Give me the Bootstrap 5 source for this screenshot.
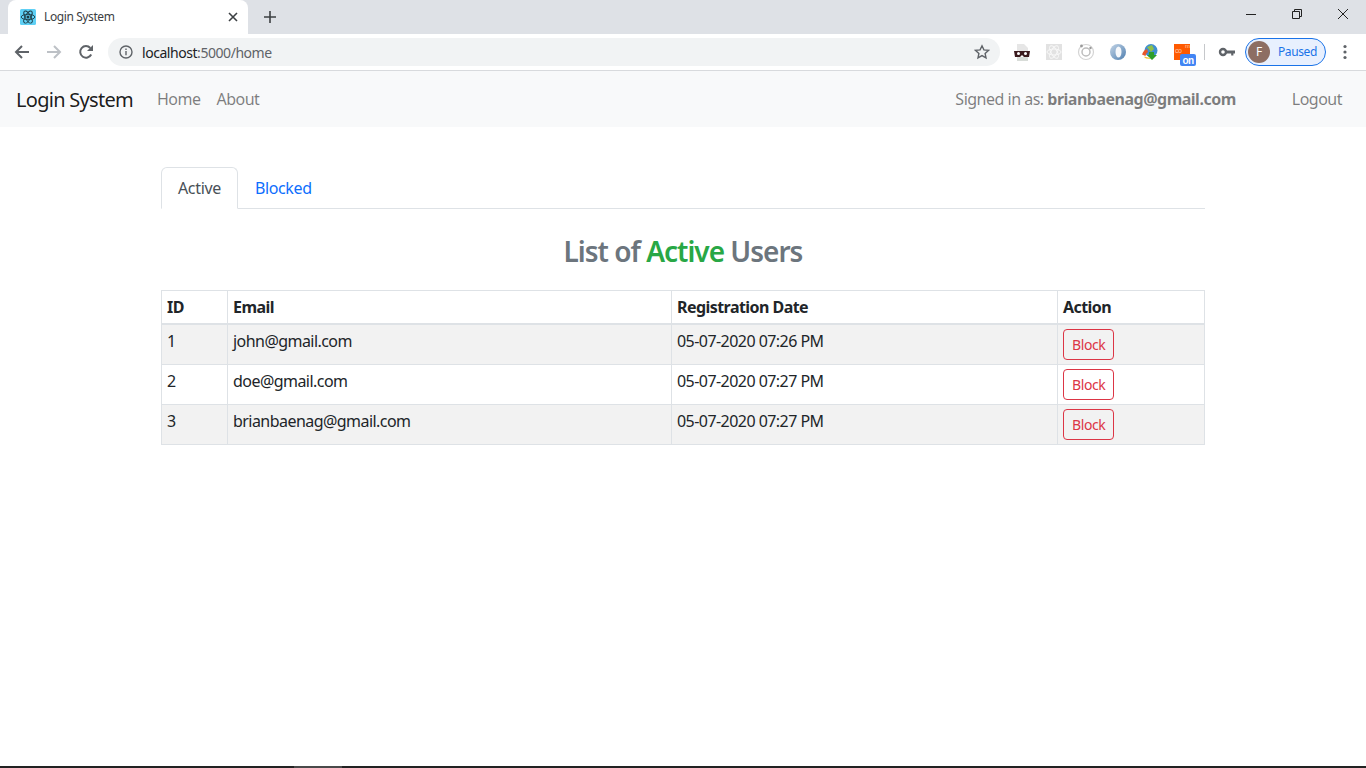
<!DOCTYPE html>
<html lang="en">

<head>
    <meta charset="UTF-8">
    <title>Login System</title>
    <link rel="stylesheet" href="https://cdn.jsdelivr.net/npm/bootstrap@5.3.3/dist/css/bootstrap.min.css">
    <style>
        html, body { height: 768px; overflow: hidden; }
        body { font-family: "Noto Sans", "Open Sans", sans-serif; color: #212529; letter-spacing: -0.5px; display: flex; flex-direction: column; }

        /* browser chrome */
        .tab-strip { height: 34px; background: #dee1e6; padding-left: 8px; }
        .browser-tab { width: 240px; height: 34px; background: #fff; border-radius: 8px 8px 0 0; padding: 0 10px 0 12px; font-size: 12px; color: #3c4043; letter-spacing: -0.4px; }
        .new-tab { width: 44px; height: 34px; }
        .win-btn { width: 46px; height: 28px; margin-bottom: 6px; }
        .tool-strip { height: 37px; background: #fff; border-bottom: 1px solid #d8dadd; padding-left: 6px; }
        .tool-btn { width: 32px; height: 32px; flex: none; }
        .url-box { width: 892px; height: 28px; margin-left: 6px; background: #f1f3f4; border-radius: 14px; padding: 0 10px 0 11px; font-size: 14px; color: #202124; letter-spacing: -0.45px; }
        .url-text { margin-left: 1px; }
        .url-dim { color: #5f6368; }
        .ext-row { gap: 8px; margin-left: 10px; }
        .ext-icon { width: 24px; height: 24px; flex: none; overflow: visible; }
        .tool-sep { width: 1px; height: 16px; background: #c6c8cb; margin: 0 10px; }
        .paused-pill { width: 81px; height: 28px; border: 1px solid #1a73e8; border-radius: 14px; background: #e8f0fe; padding-left: 2px; font-size: 12px; color: #1a73e8; letter-spacing: -0.4px; margin-left: 6px; }
        .paused-face { width: 22px; height: 22px; border-radius: 50%; background: #8d6e63; color: #fff; font-size: 12px; margin-right: 8px; }
        .kebab { margin-left: 7px; }

        /* app */
        .app-nav { height: 56px; padding: 0 16px; }
        .app-nav .navbar-brand { font-size: 20px; margin-right: 16px; padding: 2px 0 0; letter-spacing: -0.72px; color: rgba(0, 0, 0, .9); }
        .app-nav .nav-link { padding: 8px; font-size: 16px; color: rgba(0, 0, 0, .5); }
        .signed-in { color: rgba(0, 0, 0, .5); margin-right: 48px; }
        .page-wrap { width: 1044px; margin: 40px auto 0; flex: 1; }
        .list-title { font-size: 28px; font-weight: 600; color: #6c757d; margin: 25px 0 22px; line-height: 34px; text-align: center; letter-spacing: -1px; }
        .active-word { color: #28a745; }
        .users-table { table-layout: fixed; margin: 0; width: 1043px; letter-spacing: -0.55px; }
        .users-table th, .users-table td { padding: 4px 5px 3px; }
        .users-table thead th { border-bottom-width: 2px; height: 33px; vertical-align: middle; padding: 4px 5px; }
        .users-table tbody td { height: 40px; vertical-align: top; }
        .users-table > tbody > tr:nth-of-type(odd) > * { --bs-table-bg-type: #f2f2f2; }
        .block-btn { display: block; letter-spacing: -0.4px; }
        .nav-tabs .nav-link { padding: 8px 16px; height: 42px; letter-spacing: -0.35px; }
        .nav-tabs .nav-link.active { color: #495057; }
        .taskbar-line { height: 2px; background: #222; flex: none; position: relative; }
        .taskbar-lit { position: absolute; left: 294px; top: 0; width: 48px; height: 2px; background: #4a4a4a; }
    </style>
</head>

<body>
    <!-- barra de pestañas -->
    <div class="tab-strip d-flex align-items-end flex-none">
        <div class="browser-tab d-flex align-items-center">
            <svg width="16" height="16" viewBox="0 0 16 16" class="me-2 flex-shrink-0">
                <rect width="16" height="16" rx="1.5" fill="#5fd0f5"/>
                <g fill="none" stroke="#1d3a44" stroke-width=".9">
                    <ellipse cx="8" cy="8" rx="6.8" ry="2.7"/>
                    <ellipse cx="8" cy="8" rx="6.8" ry="2.7" transform="rotate(60 8 8)"/>
                    <ellipse cx="8" cy="8" rx="6.8" ry="2.7" transform="rotate(120 8 8)"/>
                </g>
                <circle cx="8" cy="8" r="1.5" fill="#1d3a44"/>
            </svg>
            <span class="flex-grow-1">Login System</span>
            <svg width="10" height="10" viewBox="0 0 10 10"><path d="M1 1l8 8M9 1l-8 8" stroke="#3c4043" stroke-width="1.6"/></svg>
        </div>
        <div class="new-tab d-flex align-items-center justify-content-center">
            <svg width="12" height="12" viewBox="0 0 12 12"><path d="M6 0v12M0 6h12" stroke="#3c4043" stroke-width="1.6"/></svg>
        </div>
        <div class="d-flex ms-auto">
            <div class="win-btn d-flex align-items-center justify-content-center">
                <svg width="10" height="10" viewBox="0 0 10 10"><path d="M0 5.5h10" stroke="#222"/></svg>
            </div>
            <div class="win-btn d-flex align-items-center justify-content-center">
                <svg width="10" height="10" viewBox="0 0 10 10"><path d="M.5 2.5h7v7h-7zM2.5 2.5v-2h7v7h-2" fill="none" stroke="#222"/></svg>
            </div>
            <div class="win-btn d-flex align-items-center justify-content-center">
                <svg width="10" height="10" viewBox="0 0 10 10"><path d="M0 0l10 10M10 0l-10 10" stroke="#222"/></svg>
            </div>
        </div>
    </div>

    <!-- barra de herramientas -->
    <div class="tool-strip d-flex align-items-center">
        <div class="tool-btn d-flex align-items-center justify-content-center">
            <svg width="16" height="16" viewBox="0 0 16 16"><path d="M15 8H2M8 2L2 8l6 6" fill="none" stroke="#5f6368" stroke-width="2"/></svg>
        </div>
        <div class="tool-btn d-flex align-items-center justify-content-center">
            <svg width="16" height="16" viewBox="0 0 16 16"><path d="M1 8h13M8 2l6 6-6 6" fill="none" stroke="#bdc1c6" stroke-width="2"/></svg>
        </div>
        <div class="tool-btn d-flex align-items-center justify-content-center">
            <svg width="16" height="16" viewBox="0 0 16 16"><path d="M13.2 10.5A5.8 5.8 0 1 1 12.3 4" fill="none" stroke="#5f6368" stroke-width="2"/><path d="M15 1v6H9z" fill="#5f6368"/></svg>
        </div>
        <div class="url-box d-flex align-items-center">
            <svg width="14" height="14" viewBox="0 0 14 14" class="me-2 flex-shrink-0"><circle cx="7" cy="7" r="6" fill="none" stroke="#5f6368" stroke-width="1.4"/><path d="M7 6v4.2M7 3.6v1.4" stroke="#5f6368" stroke-width="1.4"/></svg>
            <span class="flex-grow-1 url-text">localhost<span class="url-dim">:5000/home</span></span>
            <svg width="16" height="16" viewBox="0 0 16 16"><path d="M8 1.8l1.9 4.1 4.5.5-3.3 3 .9 4.4L8 11.6l-4 2.2.9-4.4-3.3-3 4.5-.5z" fill="none" stroke="#5f6368" stroke-width="1.4"/></svg>
        </div>
        <div class="ext-row d-flex align-items-center">
            <svg class="ext-icon" viewBox="0 0 24 24"><path d="M7 4h7l4 4v4H7z" fill="#e6e6e6"/><rect x="7" y="17" width="11" height="4" fill="#d8dcd8"/><path d="M4 11h16l-1 6h-5l-2-2-2 2H5z" fill="#3a1a1d"/><circle cx="8.5" cy="13.5" r="1.5" fill="#fff"/><circle cx="15.5" cy="13.5" r="1.5" fill="#fff"/></svg>
            <svg class="ext-icon" viewBox="0 0 24 24"><rect x="4" y="4" width="16" height="16" fill="#e2e2e2"/><g fill="none" stroke="#f8f8f8"><ellipse cx="12" cy="12" rx="7" ry="3"/><ellipse cx="12" cy="12" rx="7" ry="3" transform="rotate(60 12 12)"/><ellipse cx="12" cy="12" rx="7" ry="3" transform="rotate(120 12 12)"/></g></svg>
            <svg class="ext-icon" viewBox="0 0 24 24"><circle cx="12" cy="12" r="7.5" fill="none" stroke="#d4d4d4" stroke-width="1.2"/><circle cx="12" cy="12" r="4" fill="none" stroke="#bdbdbd" stroke-width="1.5"/><circle cx="7.5" cy="6" r="1.4" fill="#999"/><circle cx="16.5" cy="8" r="1.2" fill="#999"/></svg>
            <svg class="ext-icon" viewBox="0 0 24 24">
                <defs><linearGradient id="ringfill" x1="0" y1="0" x2="1" y2="1"><stop offset="0" stop-color="#c3d4e6"/><stop offset="1" stop-color="#4f7fb0"/></linearGradient></defs>
                <circle cx="12" cy="12" r="8" fill="url(#ringfill)"/><ellipse cx="12.5" cy="12" rx="3" ry="5.5" fill="#f6f8fb"/>
            </svg>
            <svg class="ext-icon" viewBox="0 0 24 24"><circle cx="13" cy="10.5" r="6.5" fill="#3f8fd0"/><path d="M9 7l5-2 2 4-3 3z" fill="#8fc04a"/><path d="M4 14.5c1-3 3-5 5-5.5l1 3c-1 .5-2 1.5-2.500 4z" fill="#e8562a"/><path d="M6 17c1-.5 3 .5 6 1l1 1-5-.5z" fill="#f2c230"/><path d="M11 12h5v3h3l-5 5-5-5h2z" fill="#2f9e2a"/></svg>
            <svg class="ext-icon" viewBox="0 0 24 24"><rect x="4" y="4" width="16" height="16" fill="#ff5a00"/><text x="5" y="13" font-size="7" fill="#ffc9a8" font-family="Liberation Sans, sans-serif">co</text><text x="15" y="8" font-size="6" fill="#ffc9a8" font-family="Liberation Sans, sans-serif">m</text><rect x="10" y="14" width="16" height="12" rx="2" fill="#4285f4"/><text x="18" y="24" font-size="10" font-weight="700" fill="#fff" text-anchor="middle" font-family="Liberation Sans, sans-serif">on</text></svg>
        </div>
        <div class="tool-sep"></div>
        <svg class="ext-icon" viewBox="0 0 24 24"><circle cx="8" cy="12" r="3" fill="none" stroke="#5f6368" stroke-width="2.4"/><path d="M10 10.500h10v3h-1.600v2h-2.200v-2H10z" fill="#5f6368"/></svg>
        <div class="paused-pill d-flex align-items-center">
            <div class="paused-face d-flex align-items-center justify-content-center">F</div>
            <span>Paused</span>
        </div>
        <svg class="ext-icon kebab" viewBox="0 0 24 24"><circle cx="12" cy="6.500" r="1.600" fill="#5f6368"/><circle cx="12" cy="12" r="1.600" fill="#5f6368"/><circle cx="12" cy="17.500" r="1.600" fill="#5f6368"/></svg>
    </div>

    <!-- navbar -->
    <nav class="navbar navbar-expand navbar-light bg-light app-nav">
        <a class="navbar-brand" href="#">Login System</a>
        <ul class="navbar-nav me-auto">
            <li class="nav-item"><a class="nav-link" href="#">Home</a></li>
            <li class="nav-item"><a class="nav-link" href="#">About</a></li>
        </ul>
        <span class="signed-in">Signed in as: <b>brianbaenag@gmail.com</b></span>
        <ul class="navbar-nav">
            <li class="nav-item"><a class="nav-link" href="#">Logout</a></li>
        </ul>
    </nav>

    <div class="page-wrap">
        <ul class="nav nav-tabs">
            <li class="nav-item"><a class="nav-link active" href="#">Active</a></li>
            <li class="nav-item"><a class="nav-link" href="#">Blocked</a></li>
        </ul>

        <h2 class="list-title">List of <span class="active-word">Active</span> Users</h2>

        <table class="table table-bordered table-striped users-table">
            <colgroup>
                <col style="width: 66px">
                <col style="width: 444px">
                <col style="width: 386px">
                <col style="width: 147px">
            </colgroup>
            <thead>
                <tr>
                    <th>ID</th>
                    <th>Email</th>
                    <th>Registration Date</th>
                    <th>Action</th>
                </tr>
            </thead>
            <tbody>
                <tr>
                    <td>1</td>
                    <td>john@gmail.com</td>
                    <td>05-07-2020 07:26 PM</td>
                    <td><button class="btn btn-outline-danger btn-sm block-btn">Block</button></td>
                </tr>
                <tr>
                    <td>2</td>
                    <td>doe@gmail.com</td>
                    <td>05-07-2020 07:27 PM</td>
                    <td><button class="btn btn-outline-danger btn-sm block-btn">Block</button></td>
                </tr>
                <tr>
                    <td>3</td>
                    <td>brianbaenag@gmail.com</td>
                    <td>05-07-2020 07:27 PM</td>
                    <td><button class="btn btn-outline-danger btn-sm block-btn">Block</button></td>
                </tr>
            </tbody>
        </table>
    </div>

    <div class="taskbar-line"><div class="taskbar-lit"></div></div>

    <script src="https://cdn.jsdelivr.net/npm/bootstrap@5.3.3/dist/js/bootstrap.bundle.min.js"></script>
</body>

</html>
